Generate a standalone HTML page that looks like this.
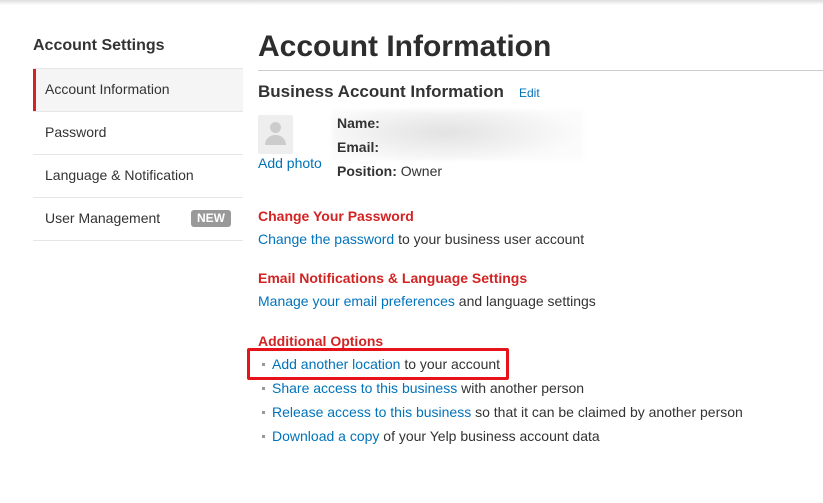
<!DOCTYPE html>
<html><head><style>
body{margin:0;width:823px;height:503px;background:#fff;font-family:"Liberation Sans",Arial,sans-serif;color:#333;position:relative;overflow:hidden}
.a{position:absolute;white-space:nowrap}
a{color:#0073bb;text-decoration:none}
.top{position:absolute;left:0;top:0;width:823px;height:5px;background:linear-gradient(#ddd,#fff)}
.row{position:absolute;left:33px;width:210px;height:42px;border-top:1px solid #e6e6e6;font-size:14px;line-height:40px;text-indent:12px}
.red{color:#d32323;font-weight:bold;font-size:14px}
.t{font-size:14px}
.b{position:absolute;left:262px;width:3px;height:3px;background:#999}
</style></head><body>
<div class="top"></div>
<div class="a" style="left:33px;top:37px;font-size:16px;font-weight:bold">Account Settings</div>
<div class="row" style="top:68px;background:#f5f5f5"><div style="position:absolute;left:0;top:0;width:3px;height:43px;background:#d32323"></div>Account Information</div>
<div class="row" style="top:111px">Password</div>
<div class="row" style="top:154px">Language &amp; Notification</div>
<div class="row" style="top:197px;border-bottom:1px solid #e6e6e6">User Management</div>
<div class="a" style="left:191px;top:210px;width:40px;height:17px;background:#999;border-radius:3px;color:#fff;font-weight:bold;font-size:12px;line-height:17px;text-align:center">NEW</div>

<div class="a" style="left:258px;top:30px;font-size:30px;font-weight:bold;color:#2d2d2d">Account Information</div>
<div class="a" style="left:258px;top:70px;width:565px;height:1px;background:#ccc"></div>
<div class="a" style="left:258px;top:82px;font-size:17px;font-weight:bold">Business Account Information</div>
<div class="a" style="left:519px;top:86px;font-size:12px"><a>Edit</a></div>
<div class="a" style="left:258px;top:115px;width:35px;height:39px;background:#eee;border-radius:2px">
<div style="position:absolute;left:12px;top:7px;width:11px;height:11px;border-radius:50%;background:#ccc"></div>
<div style="position:absolute;left:7px;top:20px;width:21px;height:10px;border-radius:10px 10px 0 0;background:#ccc"></div></div>
<div class="a t" style="left:258px;top:155px"><a>Add photo</a></div>
<div class="a" style="left:332px;top:110px;width:251px;height:50px;background:radial-gradient(ellipse 60% 70% at 45% 45%,#e2e2e2,#f3f3f3 60%,#fbfbfb 90%);filter:blur(2px)"></div>
<div class="a t" style="left:337px;top:115px;font-weight:bold">Name:</div>
<div class="a t" style="left:337px;top:139px;font-weight:bold">Email:</div>
<div class="a t" style="left:337px;top:163px"><b>Position:</b> Owner</div>

<div class="a red" style="left:258px;top:208px">Change Your Password</div>
<div class="a t" style="left:258px;top:231px"><a>Change the password</a> to your business user account</div>
<div class="a red" style="left:258px;top:270px">Email Notifications &amp; Language Settings</div>
<div class="a t" style="left:258px;top:293px"><a>Manage your email preferences</a> and language settings</div>
<div class="a red" style="left:258px;top:333px">Additional Options</div>
<div class="b" style="top:363px"></div><div class="a t" style="left:272px;top:356px"><a>Add another location</a> to your account</div>
<div class="b" style="top:387px"></div><div class="a t" style="left:272px;top:380px"><a>Share access to this business</a> with another person</div>
<div class="b" style="top:411px"></div><div class="a t" style="left:272px;top:404px"><a>Release access to this business</a> so that it can be claimed by another person</div>
<div class="b" style="top:435px"></div><div class="a t" style="left:272px;top:428px"><a>Download a copy</a> of your Yelp business account data</div>
<div class="a" style="left:247px;top:348px;width:256px;height:26px;border:3px solid #e8121a;border-radius:2px"></div>
</body></html>
